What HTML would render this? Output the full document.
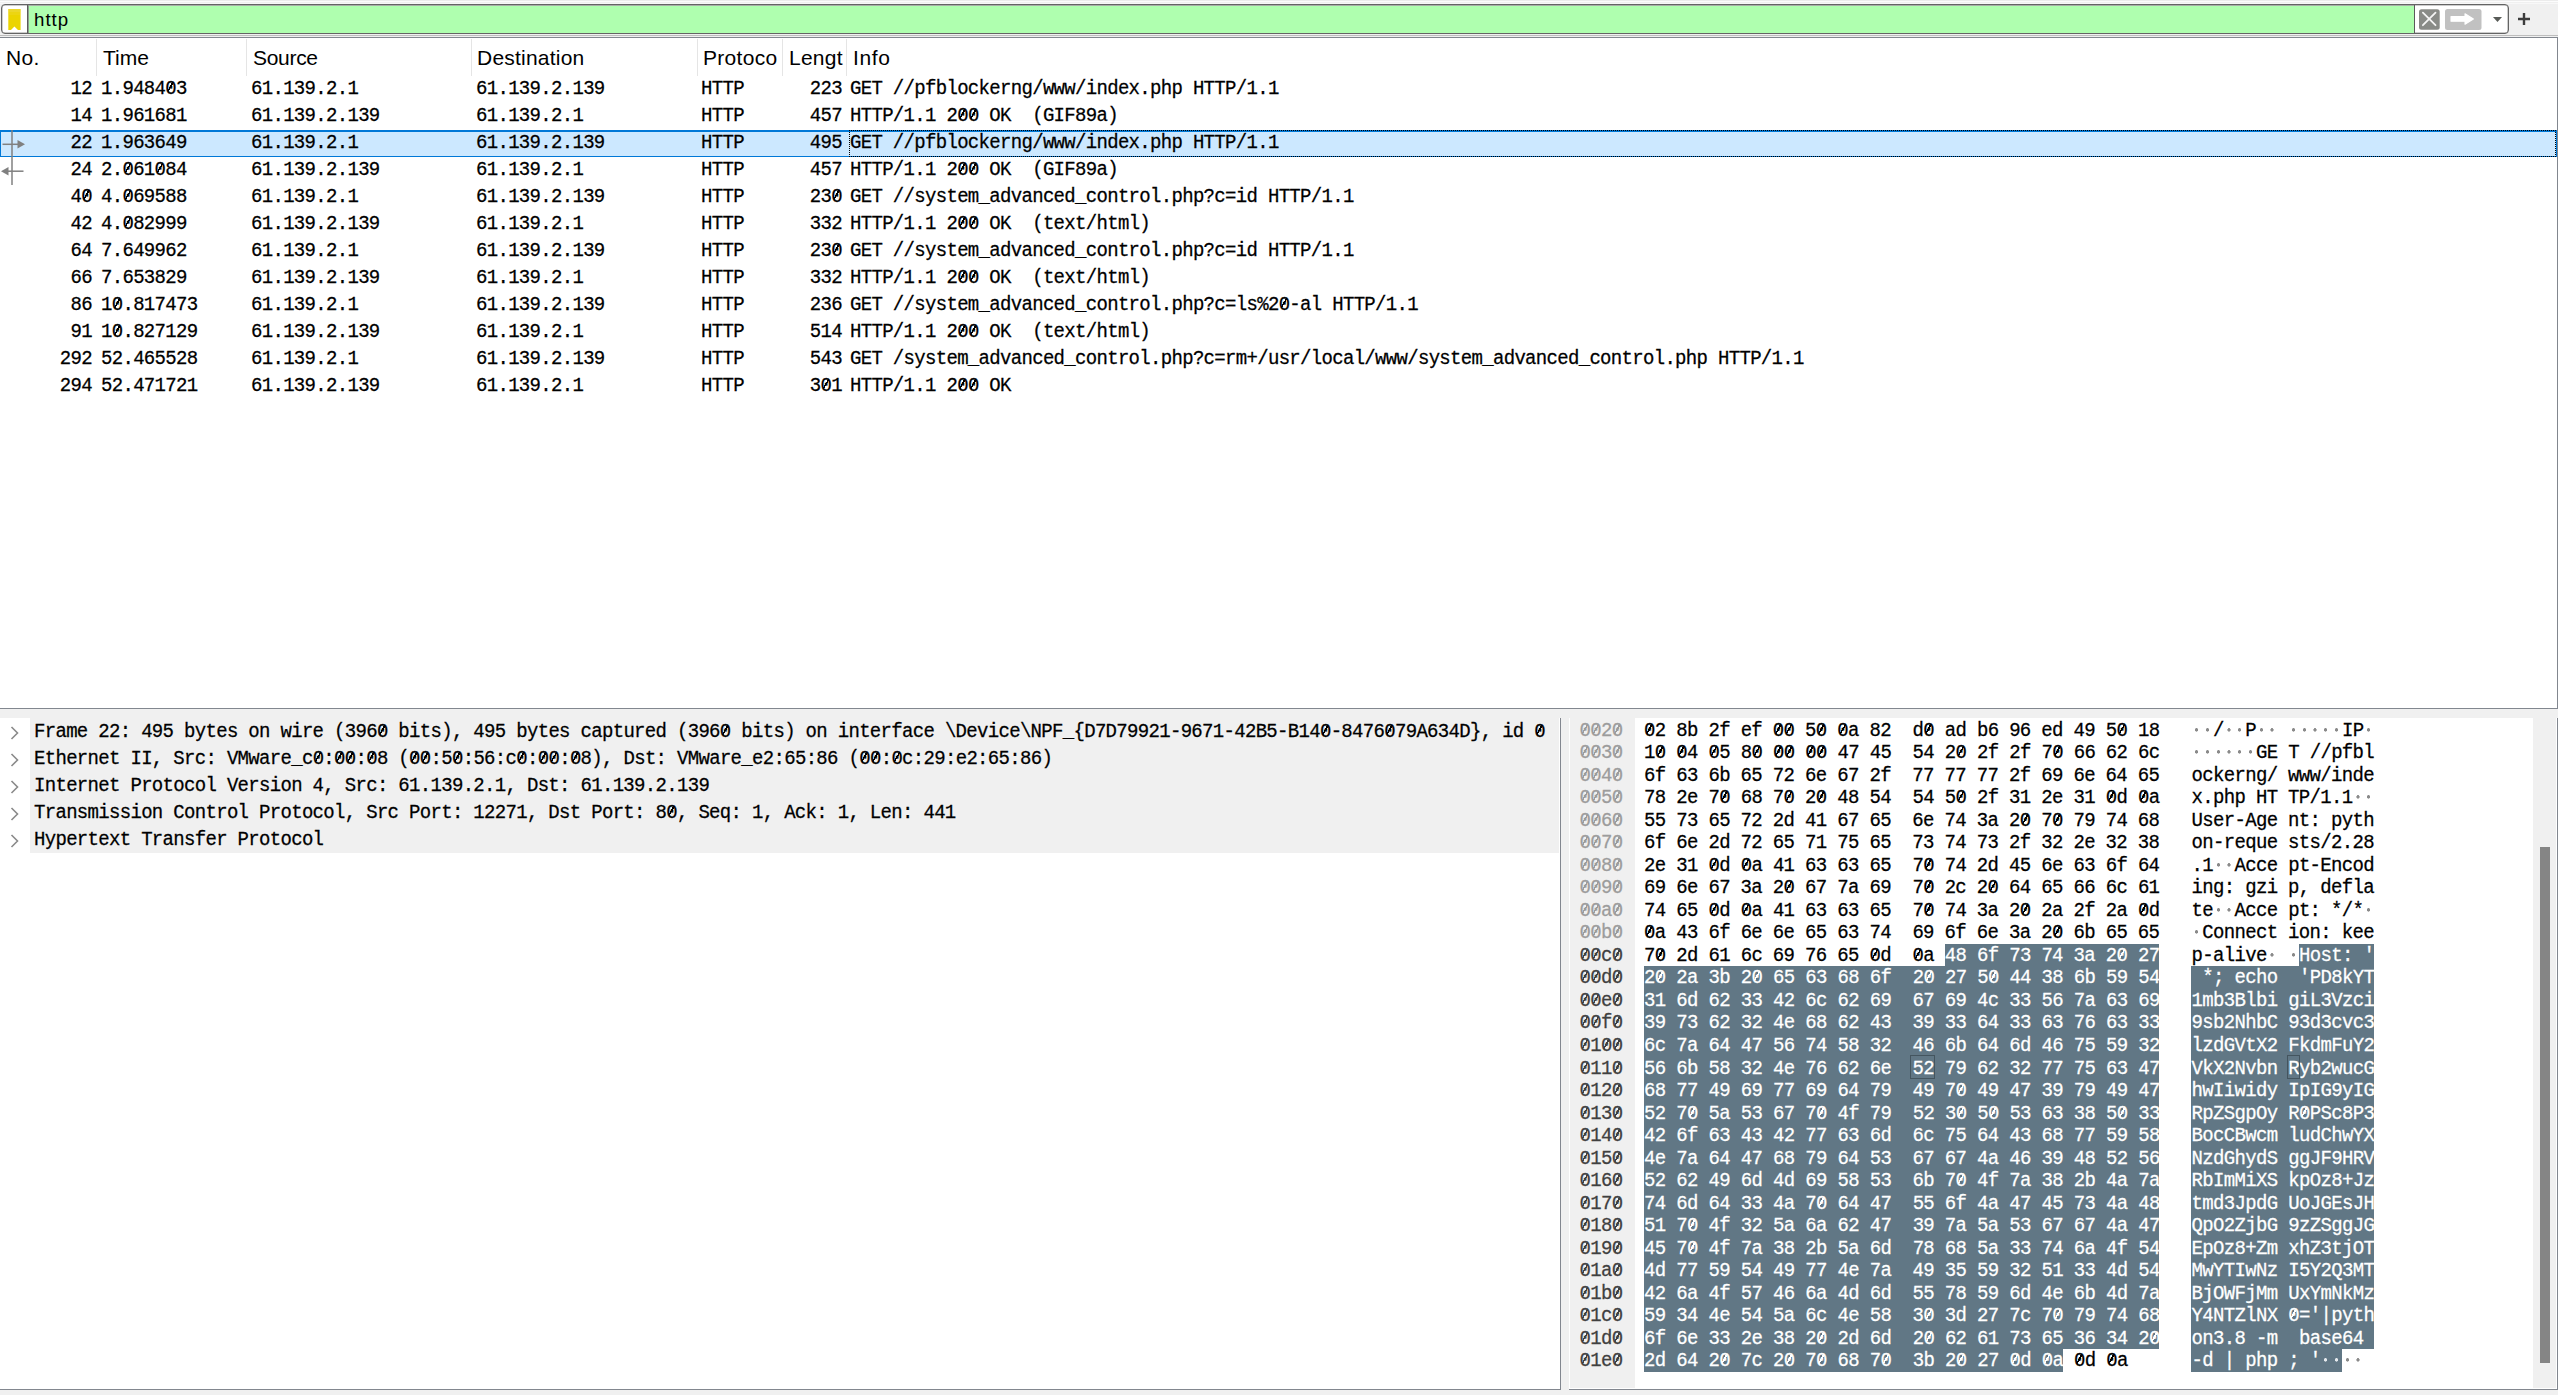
<!DOCTYPE html>
<html><head><meta charset="utf-8"><title>Wireshark</title>
<style>
*{box-sizing:border-box;margin:0;padding:0}
html,body{width:2558px;height:1395px;overflow:hidden;background:#f0f0f0;position:relative}
.a{position:absolute}
.m{font-family:'Liberation Mono',monospace;font-size:19px;letter-spacing:-0.686px;white-space:pre;color:#000;-webkit-text-stroke-width:0.25px;transform:scaleY(1.08);transform-origin:0 18.5px}
.hl.m{transform-origin:0 16.3px;letter-spacing:-0.667px}
.s{font-family:'Liberation Sans',sans-serif;white-space:pre;color:#000}
.row{position:absolute;left:0;width:2557px;height:27px;line-height:27px}
.row .c{position:absolute;top:0;height:27px;line-height:27px}
.r{text-align:right}
.hl{position:absolute;height:22.52px;line-height:22.52px}
.z{position:relative}
.z::after{content:"";position:absolute;left:2.8px;top:5.1px;width:5.4px;height:8.8px;background:linear-gradient(to bottom right,transparent calc(50% - 0.7px),currentColor calc(50% - 0.7px),currentColor calc(50% + 0.7px),transparent calc(50% + 0.7px))}
.d,.ds{color:transparent;-webkit-text-stroke-color:transparent}
.d{background:radial-gradient(circle at 50% 47%,#8a8a8a 0,#8a8a8a 1.3px,rgba(138,138,138,0) 1.9px)}
.ds{background:radial-gradient(circle at 50% 47%,#e6eaee 0,#e6eaee 1.3px,rgba(230,234,238,0) 1.9px)}
</style></head><body>

<div class="a" style="left:0;top:0;width:2558px;height:1px;background:#ececec"></div>
<div class="a" style="left:0;top:1px;width:2558px;height:1px;background:#fcfcfc"></div>
<div class="a" style="left:0;top:3px;width:2558px;height:1px;background:#f8f8f8"></div>
<div class="a" style="left:1px;top:4px;width:2508px;height:30px;border:1px solid #646464;border-radius:4px;background:#fff;box-shadow:inset 0 0 0 0.5px #9a9a9a"></div>
<div class="a" style="left:28px;top:5px;width:2386px;height:1px;background:#a8b0a8"></div>
<div class="a" style="left:28px;top:6px;width:2386px;height:27px;background:#afffaf"></div>
<div class="a" style="left:27px;top:5px;width:1px;height:28px;background:#5a5a5a"></div>
<div class="a" style="left:28px;top:5px;width:1px;height:28px;background:#8f9f8f"></div>
<div class="a" style="left:2414px;top:5px;width:1px;height:28px;background:#5a5a5a"></div>
<svg class="a" style="left:8px;top:9px" width="13" height="21" viewBox="0 0 13 21"><path d="M0.3 0 H12.6 V21 H10 L6.4 17.5 L3 21 H0.3 Z" fill="#ebd400"/><rect x="0.3" y="0" width="12.3" height="3" fill="#eedc5a" opacity="0.45"/><rect x="0.3" y="3" width="12.3" height="3" fill="#eedc5a" opacity="0.2"/></svg>
<div class="a s" style="left:34px;top:6px;height:27px;line-height:27px;font-size:18.7px;letter-spacing:1px">http</div>
<svg class="a" style="left:2419px;top:9px" width="22" height="21" viewBox="0 0 22 21"><rect x="0" y="0.2" width="20.7" height="20.5" rx="2.5" fill="#898b87"/><path d="M3.9 3.6 L16.5 16.2 M16.5 3.6 L3.9 16.2" stroke="#f4f4f4" stroke-width="1.8" stroke-linecap="round"/></svg>
<svg class="a" style="left:2445px;top:9px" width="37" height="21" viewBox="0 0 37 21"><rect x="0" y="0" width="36.5" height="21" rx="2.5" fill="#c1c1c1"/><path d="M6 7.5 H20 V4.8 L28.4 10 L20 15.2 V12.2 H6 Z" fill="#fff" stroke="#fff" stroke-width="1.1" stroke-linejoin="round"/></svg>
<svg class="a" style="left:2492px;top:16px" width="12" height="7" viewBox="0 0 12 7"><path d="M1 1 H10 L5.5 6 Z" fill="#585b57"/></svg>
<svg class="a" style="left:2517px;top:12px" width="14" height="14" viewBox="0 0 14 14"><path d="M7 1 V13 M1 7 H13" stroke="#3c3c3c" stroke-width="2.4"/></svg>
<div class="a" style="left:0;top:35px;width:2558px;height:1px;background:#bdbdbd"></div>
<div class="a" style="left:-1px;top:37px;width:2559px;height:672px;border:1px solid #82878f;background:#fff"></div>
<div class="a s" style="left:6px;top:39px;height:38px;line-height:38px;font-size:21px;letter-spacing:0.3px">No.</div>
<div class="a s" style="left:103px;top:39px;height:38px;line-height:38px;font-size:21px;letter-spacing:0px">Time</div>
<div class="a s" style="left:253px;top:39px;height:38px;line-height:38px;font-size:21px;letter-spacing:-0.3px">Source</div>
<div class="a s" style="left:477px;top:39px;height:38px;line-height:38px;font-size:21px;letter-spacing:0.22px">Destination</div>
<div class="a s" style="left:703px;top:39px;height:38px;line-height:38px;font-size:21px;letter-spacing:0.3px">Protoco</div>
<div class="a s" style="left:789px;top:39px;height:38px;line-height:38px;font-size:21px;letter-spacing:0.25px">Lengt</div>
<div class="a s" style="left:853px;top:39px;height:38px;line-height:38px;font-size:21px;letter-spacing:0.6px">Info</div>
<div class="a" style="left:96px;top:39px;width:1px;height:37px;background:#e5e5e5"></div>
<div class="a" style="left:246px;top:39px;width:1px;height:37px;background:#e5e5e5"></div>
<div class="a" style="left:471px;top:39px;width:1px;height:37px;background:#e5e5e5"></div>
<div class="a" style="left:697px;top:39px;width:1px;height:37px;background:#e5e5e5"></div>
<div class="a" style="left:782px;top:39px;width:1px;height:37px;background:#e5e5e5"></div>
<div class="a" style="left:846px;top:39px;width:1px;height:37px;background:#e5e5e5"></div>
<div class="a m r" style="left:0;top:76px;width:92px;height:27px;line-height:27px">12</div>
<div class="a m" style="left:101px;top:76px;height:27px;line-height:27px">1.9484<span class="z">0</span>3</div>
<div class="a m" style="left:251px;top:76px;height:27px;line-height:27px">61.139.2.1</div>
<div class="a m" style="left:476px;top:76px;height:27px;line-height:27px">61.139.2.139</div>
<div class="a m" style="left:701px;top:76px;height:27px;line-height:27px">HTTP</div>
<div class="a m r" style="left:700px;top:76px;width:142px;height:27px;line-height:27px">223</div>
<div class="a m" style="left:850px;top:76px;height:27px;line-height:27px">GET //pfblockerng/www/index.php HTTP/1.1</div>
<div class="a m r" style="left:0;top:103px;width:92px;height:27px;line-height:27px">14</div>
<div class="a m" style="left:101px;top:103px;height:27px;line-height:27px">1.961681</div>
<div class="a m" style="left:251px;top:103px;height:27px;line-height:27px">61.139.2.139</div>
<div class="a m" style="left:476px;top:103px;height:27px;line-height:27px">61.139.2.1</div>
<div class="a m" style="left:701px;top:103px;height:27px;line-height:27px">HTTP</div>
<div class="a m r" style="left:700px;top:103px;width:142px;height:27px;line-height:27px">457</div>
<div class="a m" style="left:850px;top:103px;height:27px;line-height:27px">HTTP/1.1 2<span class="z">0</span><span class="z">0</span> OK  (GIF89a)</div>
<div class="a" style="left:0;top:130px;width:2557px;height:27px;background:#cce8ff;border-top:2px solid #0078d7;border-bottom:1px solid #0078d7;border-left:1px solid #0078d7;border-right:1px solid #0078d7"></div>
<div class="a" style="left:849px;top:130px;width:1707px;height:27px;border:1px dotted #000"></div>
<div class="a m r" style="left:0;top:130px;width:92px;height:27px;line-height:27px">22</div>
<div class="a m" style="left:101px;top:130px;height:27px;line-height:27px">1.963649</div>
<div class="a m" style="left:251px;top:130px;height:27px;line-height:27px">61.139.2.1</div>
<div class="a m" style="left:476px;top:130px;height:27px;line-height:27px">61.139.2.139</div>
<div class="a m" style="left:701px;top:130px;height:27px;line-height:27px">HTTP</div>
<div class="a m r" style="left:700px;top:130px;width:142px;height:27px;line-height:27px">495</div>
<div class="a m" style="left:850px;top:130px;height:27px;line-height:27px">GET //pfblockerng/www/index.php HTTP/1.1</div>
<div class="a m r" style="left:0;top:157px;width:92px;height:27px;line-height:27px">24</div>
<div class="a m" style="left:101px;top:157px;height:27px;line-height:27px">2.<span class="z">0</span>61<span class="z">0</span>84</div>
<div class="a m" style="left:251px;top:157px;height:27px;line-height:27px">61.139.2.139</div>
<div class="a m" style="left:476px;top:157px;height:27px;line-height:27px">61.139.2.1</div>
<div class="a m" style="left:701px;top:157px;height:27px;line-height:27px">HTTP</div>
<div class="a m r" style="left:700px;top:157px;width:142px;height:27px;line-height:27px">457</div>
<div class="a m" style="left:850px;top:157px;height:27px;line-height:27px">HTTP/1.1 2<span class="z">0</span><span class="z">0</span> OK  (GIF89a)</div>
<div class="a m r" style="left:0;top:184px;width:92px;height:27px;line-height:27px">4<span class="z">0</span></div>
<div class="a m" style="left:101px;top:184px;height:27px;line-height:27px">4.<span class="z">0</span>69588</div>
<div class="a m" style="left:251px;top:184px;height:27px;line-height:27px">61.139.2.1</div>
<div class="a m" style="left:476px;top:184px;height:27px;line-height:27px">61.139.2.139</div>
<div class="a m" style="left:701px;top:184px;height:27px;line-height:27px">HTTP</div>
<div class="a m r" style="left:700px;top:184px;width:142px;height:27px;line-height:27px">23<span class="z">0</span></div>
<div class="a m" style="left:850px;top:184px;height:27px;line-height:27px">GET //system_advanced_control.php?c=id HTTP/1.1</div>
<div class="a m r" style="left:0;top:211px;width:92px;height:27px;line-height:27px">42</div>
<div class="a m" style="left:101px;top:211px;height:27px;line-height:27px">4.<span class="z">0</span>82999</div>
<div class="a m" style="left:251px;top:211px;height:27px;line-height:27px">61.139.2.139</div>
<div class="a m" style="left:476px;top:211px;height:27px;line-height:27px">61.139.2.1</div>
<div class="a m" style="left:701px;top:211px;height:27px;line-height:27px">HTTP</div>
<div class="a m r" style="left:700px;top:211px;width:142px;height:27px;line-height:27px">332</div>
<div class="a m" style="left:850px;top:211px;height:27px;line-height:27px">HTTP/1.1 2<span class="z">0</span><span class="z">0</span> OK  (text/html)</div>
<div class="a m r" style="left:0;top:238px;width:92px;height:27px;line-height:27px">64</div>
<div class="a m" style="left:101px;top:238px;height:27px;line-height:27px">7.649962</div>
<div class="a m" style="left:251px;top:238px;height:27px;line-height:27px">61.139.2.1</div>
<div class="a m" style="left:476px;top:238px;height:27px;line-height:27px">61.139.2.139</div>
<div class="a m" style="left:701px;top:238px;height:27px;line-height:27px">HTTP</div>
<div class="a m r" style="left:700px;top:238px;width:142px;height:27px;line-height:27px">23<span class="z">0</span></div>
<div class="a m" style="left:850px;top:238px;height:27px;line-height:27px">GET //system_advanced_control.php?c=id HTTP/1.1</div>
<div class="a m r" style="left:0;top:265px;width:92px;height:27px;line-height:27px">66</div>
<div class="a m" style="left:101px;top:265px;height:27px;line-height:27px">7.653829</div>
<div class="a m" style="left:251px;top:265px;height:27px;line-height:27px">61.139.2.139</div>
<div class="a m" style="left:476px;top:265px;height:27px;line-height:27px">61.139.2.1</div>
<div class="a m" style="left:701px;top:265px;height:27px;line-height:27px">HTTP</div>
<div class="a m r" style="left:700px;top:265px;width:142px;height:27px;line-height:27px">332</div>
<div class="a m" style="left:850px;top:265px;height:27px;line-height:27px">HTTP/1.1 2<span class="z">0</span><span class="z">0</span> OK  (text/html)</div>
<div class="a m r" style="left:0;top:292px;width:92px;height:27px;line-height:27px">86</div>
<div class="a m" style="left:101px;top:292px;height:27px;line-height:27px">1<span class="z">0</span>.817473</div>
<div class="a m" style="left:251px;top:292px;height:27px;line-height:27px">61.139.2.1</div>
<div class="a m" style="left:476px;top:292px;height:27px;line-height:27px">61.139.2.139</div>
<div class="a m" style="left:701px;top:292px;height:27px;line-height:27px">HTTP</div>
<div class="a m r" style="left:700px;top:292px;width:142px;height:27px;line-height:27px">236</div>
<div class="a m" style="left:850px;top:292px;height:27px;line-height:27px">GET //system_advanced_control.php?c=ls%2<span class="z">0</span>-al HTTP/1.1</div>
<div class="a m r" style="left:0;top:319px;width:92px;height:27px;line-height:27px">91</div>
<div class="a m" style="left:101px;top:319px;height:27px;line-height:27px">1<span class="z">0</span>.827129</div>
<div class="a m" style="left:251px;top:319px;height:27px;line-height:27px">61.139.2.139</div>
<div class="a m" style="left:476px;top:319px;height:27px;line-height:27px">61.139.2.1</div>
<div class="a m" style="left:701px;top:319px;height:27px;line-height:27px">HTTP</div>
<div class="a m r" style="left:700px;top:319px;width:142px;height:27px;line-height:27px">514</div>
<div class="a m" style="left:850px;top:319px;height:27px;line-height:27px">HTTP/1.1 2<span class="z">0</span><span class="z">0</span> OK  (text/html)</div>
<div class="a m r" style="left:0;top:346px;width:92px;height:27px;line-height:27px">292</div>
<div class="a m" style="left:101px;top:346px;height:27px;line-height:27px">52.465528</div>
<div class="a m" style="left:251px;top:346px;height:27px;line-height:27px">61.139.2.1</div>
<div class="a m" style="left:476px;top:346px;height:27px;line-height:27px">61.139.2.139</div>
<div class="a m" style="left:701px;top:346px;height:27px;line-height:27px">HTTP</div>
<div class="a m r" style="left:700px;top:346px;width:142px;height:27px;line-height:27px">543</div>
<div class="a m" style="left:850px;top:346px;height:27px;line-height:27px">GET /system_advanced_control.php?c=rm+/usr/local/www/system_advanced_control.php HTTP/1.1</div>
<div class="a m r" style="left:0;top:373px;width:92px;height:27px;line-height:27px">294</div>
<div class="a m" style="left:101px;top:373px;height:27px;line-height:27px">52.471721</div>
<div class="a m" style="left:251px;top:373px;height:27px;line-height:27px">61.139.2.139</div>
<div class="a m" style="left:476px;top:373px;height:27px;line-height:27px">61.139.2.1</div>
<div class="a m" style="left:701px;top:373px;height:27px;line-height:27px">HTTP</div>
<div class="a m r" style="left:700px;top:373px;width:142px;height:27px;line-height:27px">3<span class="z">0</span>1</div>
<div class="a m" style="left:850px;top:373px;height:27px;line-height:27px">HTTP/1.1 2<span class="z">0</span><span class="z">0</span> OK</div>
<svg class="a" style="left:0;top:128px" width="30" height="60" viewBox="0 0 30 60"><g stroke="#808080" stroke-width="1.5" fill="none"><path d="M12 2 V57"/><path d="M2.5 16.3 H20"/><path d="M23.5 43.2 H5"/></g><path d="M17.5 12 L25 16.3 L17.5 20.6 Z" fill="#808080"/><path d="M1 43.2 L8.5 39 L8.5 47.4 Z" fill="#808080"/></svg>
<div class="a" style="left:0;top:718px;width:1561px;height:672px;background:#fff;border-right:1px solid #82878f;border-bottom:1px solid #82878f"></div>
<div class="a" style="left:30px;top:718px;width:1529px;height:135px;background:#f0f0f0"></div>
<svg class="a" style="left:10px;top:725.5px" width="10" height="14" viewBox="0 0 10 14"><path d="M1.5 1 L7.5 7 L1.5 13" stroke="#8a8a8a" stroke-width="1.6" fill="none"/></svg>
<div class="a m" style="left:34px;top:719px;height:27px;line-height:27px">Frame 22: 495 bytes on wire (396<span class="z">0</span> bits), 495 bytes captured (396<span class="z">0</span> bits) on interface \Device\NPF_{D7D79921-9671-42B5-B14<span class="z">0</span>-8476<span class="z">0</span>79A634D}, id <span class="z">0</span></div>
<svg class="a" style="left:10px;top:752.5px" width="10" height="14" viewBox="0 0 10 14"><path d="M1.5 1 L7.5 7 L1.5 13" stroke="#8a8a8a" stroke-width="1.6" fill="none"/></svg>
<div class="a m" style="left:34px;top:746px;height:27px;line-height:27px">Ethernet II, Src: VMware_c<span class="z">0</span>:<span class="z">0</span><span class="z">0</span>:<span class="z">0</span>8 (<span class="z">0</span><span class="z">0</span>:5<span class="z">0</span>:56:c<span class="z">0</span>:<span class="z">0</span><span class="z">0</span>:<span class="z">0</span>8), Dst: VMware_e2:65:86 (<span class="z">0</span><span class="z">0</span>:<span class="z">0</span>c:29:e2:65:86)</div>
<svg class="a" style="left:10px;top:779.5px" width="10" height="14" viewBox="0 0 10 14"><path d="M1.5 1 L7.5 7 L1.5 13" stroke="#8a8a8a" stroke-width="1.6" fill="none"/></svg>
<div class="a m" style="left:34px;top:773px;height:27px;line-height:27px">Internet Protocol Version 4, Src: 61.139.2.1, Dst: 61.139.2.139</div>
<svg class="a" style="left:10px;top:806.5px" width="10" height="14" viewBox="0 0 10 14"><path d="M1.5 1 L7.5 7 L1.5 13" stroke="#8a8a8a" stroke-width="1.6" fill="none"/></svg>
<div class="a m" style="left:34px;top:800px;height:27px;line-height:27px">Transmission Control Protocol, Src Port: 12271, Dst Port: 8<span class="z">0</span>, Seq: 1, Ack: 1, Len: 441</div>
<svg class="a" style="left:10px;top:833.5px" width="10" height="14" viewBox="0 0 10 14"><path d="M1.5 1 L7.5 7 L1.5 13" stroke="#8a8a8a" stroke-width="1.6" fill="none"/></svg>
<div class="a m" style="left:34px;top:827px;height:27px;line-height:27px">Hypertext Transfer Protocol</div>
<div class="a" style="left:1569px;top:718px;width:989px;height:672px;background:#fff;border-bottom:1px solid #82878f;border-right:1px solid #82878f"></div>
<div class="a" style="left:1570px;top:718px;width:65px;height:670px;background:#f0f0f0"></div>
<div class="a" style="left:2533px;top:718px;width:23px;height:670px;background:#f0f0f0"></div>
<div class="a" style="left:2540px;top:847px;width:10px;height:516px;background:#858585"></div>
<div class="hl m" style="left:1579.59px;top:719.70px;color:#9c9c9c"><span class="z">0</span><span class="z">0</span>2<span class="z">0</span></div>
<div class="hl m" style="left:1644.00px;top:719.70px"><span class="z">0</span>2 8b 2f ef <span class="z">0</span><span class="z">0</span> 5<span class="z">0</span> <span class="z">0</span>a 82  d<span class="z">0</span> ad b6 96 ed 49 5<span class="z">0</span> 18</div>
<div class="hl m" style="left:2191.49px;top:719.70px"><span class="d">·</span><span class="d">·</span>/<span class="d">·</span><span class="d">·</span>P<span class="d">·</span><span class="d">·</span> <span class="d">·</span><span class="d">·</span><span class="d">·</span><span class="d">·</span><span class="d">·</span>IP<span class="d">·</span></div>
<div class="hl m" style="left:1579.59px;top:742.22px;color:#9c9c9c"><span class="z">0</span><span class="z">0</span>3<span class="z">0</span></div>
<div class="hl m" style="left:1644.00px;top:742.22px">1<span class="z">0</span> <span class="z">0</span>4 <span class="z">0</span>5 8<span class="z">0</span> <span class="z">0</span><span class="z">0</span> <span class="z">0</span><span class="z">0</span> 47 45  54 2<span class="z">0</span> 2f 2f 7<span class="z">0</span> 66 62 6c</div>
<div class="hl m" style="left:2191.49px;top:742.22px"><span class="d">·</span><span class="d">·</span><span class="d">·</span><span class="d">·</span><span class="d">·</span><span class="d">·</span>GE T //pfbl</div>
<div class="hl m" style="left:1579.59px;top:764.74px;color:#9c9c9c"><span class="z">0</span><span class="z">0</span>4<span class="z">0</span></div>
<div class="hl m" style="left:1644.00px;top:764.74px">6f 63 6b 65 72 6e 67 2f  77 77 77 2f 69 6e 64 65</div>
<div class="hl m" style="left:2191.49px;top:764.74px">ockerng/ www/inde</div>
<div class="hl m" style="left:1579.59px;top:787.26px;color:#9c9c9c"><span class="z">0</span><span class="z">0</span>5<span class="z">0</span></div>
<div class="hl m" style="left:1644.00px;top:787.26px">78 2e 7<span class="z">0</span> 68 7<span class="z">0</span> 2<span class="z">0</span> 48 54  54 5<span class="z">0</span> 2f 31 2e 31 <span class="z">0</span>d <span class="z">0</span>a</div>
<div class="hl m" style="left:2191.49px;top:787.26px">x.php HT TP/1.1<span class="d">·</span><span class="d">·</span></div>
<div class="hl m" style="left:1579.59px;top:809.78px;color:#9c9c9c"><span class="z">0</span><span class="z">0</span>6<span class="z">0</span></div>
<div class="hl m" style="left:1644.00px;top:809.78px">55 73 65 72 2d 41 67 65  6e 74 3a 2<span class="z">0</span> 7<span class="z">0</span> 79 74 68</div>
<div class="hl m" style="left:2191.49px;top:809.78px">User-Age nt: pyth</div>
<div class="hl m" style="left:1579.59px;top:832.30px;color:#9c9c9c"><span class="z">0</span><span class="z">0</span>7<span class="z">0</span></div>
<div class="hl m" style="left:1644.00px;top:832.30px">6f 6e 2d 72 65 71 75 65  73 74 73 2f 32 2e 32 38</div>
<div class="hl m" style="left:2191.49px;top:832.30px">on-reque sts/2.28</div>
<div class="hl m" style="left:1579.59px;top:854.82px;color:#9c9c9c"><span class="z">0</span><span class="z">0</span>8<span class="z">0</span></div>
<div class="hl m" style="left:1644.00px;top:854.82px">2e 31 <span class="z">0</span>d <span class="z">0</span>a 41 63 63 65  7<span class="z">0</span> 74 2d 45 6e 63 6f 64</div>
<div class="hl m" style="left:2191.49px;top:854.82px">.1<span class="d">·</span><span class="d">·</span>Acce pt-Encod</div>
<div class="hl m" style="left:1579.59px;top:877.34px;color:#9c9c9c"><span class="z">0</span><span class="z">0</span>9<span class="z">0</span></div>
<div class="hl m" style="left:1644.00px;top:877.34px">69 6e 67 3a 2<span class="z">0</span> 67 7a 69  7<span class="z">0</span> 2c 2<span class="z">0</span> 64 65 66 6c 61</div>
<div class="hl m" style="left:2191.49px;top:877.34px">ing: gzi p, defla</div>
<div class="hl m" style="left:1579.59px;top:899.86px;color:#9c9c9c"><span class="z">0</span><span class="z">0</span>a<span class="z">0</span></div>
<div class="hl m" style="left:1644.00px;top:899.86px">74 65 <span class="z">0</span>d <span class="z">0</span>a 41 63 63 65  7<span class="z">0</span> 74 3a 2<span class="z">0</span> 2a 2f 2a <span class="z">0</span>d</div>
<div class="hl m" style="left:2191.49px;top:899.86px">te<span class="d">·</span><span class="d">·</span>Acce pt: */*<span class="d">·</span></div>
<div class="hl m" style="left:1579.59px;top:922.38px;color:#9c9c9c"><span class="z">0</span><span class="z">0</span>b<span class="z">0</span></div>
<div class="hl m" style="left:1644.00px;top:922.38px"><span class="z">0</span>a 43 6f 6e 6e 65 63 74  69 6f 6e 3a 2<span class="z">0</span> 6b 65 65</div>
<div class="hl m" style="left:2191.49px;top:922.38px"><span class="d">·</span>Connect ion: kee</div>
<div class="a" style="left:1944.58px;top:943.80px;width:214.70px;height:22.52px;background:#617785"></div>
<div class="a" style="left:2298.84px;top:943.80px;width:75.14px;height:22.52px;background:#617785"></div>
<div class="hl m" style="left:1579.59px;top:944.90px;color:#404040"><span class="z">0</span><span class="z">0</span>c<span class="z">0</span></div>
<div class="hl m" style="left:1644.00px;top:944.90px">7<span class="z">0</span> 2d 61 6c 69 76 65 <span class="z">0</span>d  <span class="z">0</span>a <span style="color:#fff">48</span> <span style="color:#fff">6f</span> <span style="color:#fff">73</span> <span style="color:#fff">74</span> <span style="color:#fff">3a</span> <span style="color:#fff">2<span class="z">0</span></span> <span style="color:#fff">27</span></div>
<div class="hl m" style="left:2191.49px;top:944.90px">p-alive<span class="d">·</span> <span class="d">·</span><span style="color:#fff">H</span><span style="color:#fff">o</span><span style="color:#fff">s</span><span style="color:#fff">t</span><span style="color:#fff">:</span><span style="color:#fff"> </span><span style="color:#fff">&#x27;</span></div>
<div class="a" style="left:1644.00px;top:966.32px;width:515.28px;height:22.52px;background:#617785"></div>
<div class="a" style="left:2191.49px;top:966.32px;width:182.49px;height:22.52px;background:#617785"></div>
<div class="hl m" style="left:1579.59px;top:967.42px;color:#404040"><span class="z">0</span><span class="z">0</span>d<span class="z">0</span></div>
<div class="hl m" style="left:1644.00px;top:967.42px"><span style="color:#fff">2<span class="z">0</span></span> <span style="color:#fff">2a</span> <span style="color:#fff">3b</span> <span style="color:#fff">2<span class="z">0</span></span> <span style="color:#fff">65</span> <span style="color:#fff">63</span> <span style="color:#fff">68</span> <span style="color:#fff">6f</span>  <span style="color:#fff">2<span class="z">0</span></span> <span style="color:#fff">27</span> <span style="color:#fff">5<span class="z">0</span></span> <span style="color:#fff">44</span> <span style="color:#fff">38</span> <span style="color:#fff">6b</span> <span style="color:#fff">59</span> <span style="color:#fff">54</span></div>
<div class="hl m" style="left:2191.49px;top:967.42px"><span style="color:#fff"> </span><span style="color:#fff">*</span><span style="color:#fff">;</span><span style="color:#fff"> </span><span style="color:#fff">e</span><span style="color:#fff">c</span><span style="color:#fff">h</span><span style="color:#fff">o</span> <span style="color:#fff"> </span><span style="color:#fff">&#x27;</span><span style="color:#fff">P</span><span style="color:#fff">D</span><span style="color:#fff">8</span><span style="color:#fff">k</span><span style="color:#fff">Y</span><span style="color:#fff">T</span></div>
<div class="a" style="left:1644.00px;top:988.84px;width:515.28px;height:22.52px;background:#617785"></div>
<div class="a" style="left:2191.49px;top:988.84px;width:182.49px;height:22.52px;background:#617785"></div>
<div class="hl m" style="left:1579.59px;top:989.94px;color:#404040"><span class="z">0</span><span class="z">0</span>e<span class="z">0</span></div>
<div class="hl m" style="left:1644.00px;top:989.94px"><span style="color:#fff">31</span> <span style="color:#fff">6d</span> <span style="color:#fff">62</span> <span style="color:#fff">33</span> <span style="color:#fff">42</span> <span style="color:#fff">6c</span> <span style="color:#fff">62</span> <span style="color:#fff">69</span>  <span style="color:#fff">67</span> <span style="color:#fff">69</span> <span style="color:#fff">4c</span> <span style="color:#fff">33</span> <span style="color:#fff">56</span> <span style="color:#fff">7a</span> <span style="color:#fff">63</span> <span style="color:#fff">69</span></div>
<div class="hl m" style="left:2191.49px;top:989.94px"><span style="color:#fff">1</span><span style="color:#fff">m</span><span style="color:#fff">b</span><span style="color:#fff">3</span><span style="color:#fff">B</span><span style="color:#fff">l</span><span style="color:#fff">b</span><span style="color:#fff">i</span> <span style="color:#fff">g</span><span style="color:#fff">i</span><span style="color:#fff">L</span><span style="color:#fff">3</span><span style="color:#fff">V</span><span style="color:#fff">z</span><span style="color:#fff">c</span><span style="color:#fff">i</span></div>
<div class="a" style="left:1644.00px;top:1011.36px;width:515.28px;height:22.52px;background:#617785"></div>
<div class="a" style="left:2191.49px;top:1011.36px;width:182.49px;height:22.52px;background:#617785"></div>
<div class="hl m" style="left:1579.59px;top:1012.46px;color:#404040"><span class="z">0</span><span class="z">0</span>f<span class="z">0</span></div>
<div class="hl m" style="left:1644.00px;top:1012.46px"><span style="color:#fff">39</span> <span style="color:#fff">73</span> <span style="color:#fff">62</span> <span style="color:#fff">32</span> <span style="color:#fff">4e</span> <span style="color:#fff">68</span> <span style="color:#fff">62</span> <span style="color:#fff">43</span>  <span style="color:#fff">39</span> <span style="color:#fff">33</span> <span style="color:#fff">64</span> <span style="color:#fff">33</span> <span style="color:#fff">63</span> <span style="color:#fff">76</span> <span style="color:#fff">63</span> <span style="color:#fff">33</span></div>
<div class="hl m" style="left:2191.49px;top:1012.46px"><span style="color:#fff">9</span><span style="color:#fff">s</span><span style="color:#fff">b</span><span style="color:#fff">2</span><span style="color:#fff">N</span><span style="color:#fff">h</span><span style="color:#fff">b</span><span style="color:#fff">C</span> <span style="color:#fff">9</span><span style="color:#fff">3</span><span style="color:#fff">d</span><span style="color:#fff">3</span><span style="color:#fff">c</span><span style="color:#fff">v</span><span style="color:#fff">c</span><span style="color:#fff">3</span></div>
<div class="a" style="left:1644.00px;top:1033.88px;width:515.28px;height:22.52px;background:#617785"></div>
<div class="a" style="left:2191.49px;top:1033.88px;width:182.49px;height:22.52px;background:#617785"></div>
<div class="hl m" style="left:1579.59px;top:1034.98px;color:#404040"><span class="z">0</span>1<span class="z">0</span><span class="z">0</span></div>
<div class="hl m" style="left:1644.00px;top:1034.98px"><span style="color:#fff">6c</span> <span style="color:#fff">7a</span> <span style="color:#fff">64</span> <span style="color:#fff">47</span> <span style="color:#fff">56</span> <span style="color:#fff">74</span> <span style="color:#fff">58</span> <span style="color:#fff">32</span>  <span style="color:#fff">46</span> <span style="color:#fff">6b</span> <span style="color:#fff">64</span> <span style="color:#fff">6d</span> <span style="color:#fff">46</span> <span style="color:#fff">75</span> <span style="color:#fff">59</span> <span style="color:#fff">32</span></div>
<div class="hl m" style="left:2191.49px;top:1034.98px"><span style="color:#fff">l</span><span style="color:#fff">z</span><span style="color:#fff">d</span><span style="color:#fff">G</span><span style="color:#fff">V</span><span style="color:#fff">t</span><span style="color:#fff">X</span><span style="color:#fff">2</span> <span style="color:#fff">F</span><span style="color:#fff">k</span><span style="color:#fff">d</span><span style="color:#fff">m</span><span style="color:#fff">F</span><span style="color:#fff">u</span><span style="color:#fff">Y</span><span style="color:#fff">2</span></div>
<div class="a" style="left:1644.00px;top:1056.40px;width:515.28px;height:22.52px;background:#617785"></div>
<div class="a" style="left:2191.49px;top:1056.40px;width:182.49px;height:22.52px;background:#617785"></div>
<div class="hl m" style="left:1579.59px;top:1057.50px;color:#404040"><span class="z">0</span>11<span class="z">0</span></div>
<div class="hl m" style="left:1644.00px;top:1057.50px"><span style="color:#fff">56</span> <span style="color:#fff">6b</span> <span style="color:#fff">58</span> <span style="color:#fff">32</span> <span style="color:#fff">4e</span> <span style="color:#fff">76</span> <span style="color:#fff">62</span> <span style="color:#fff">6e</span>  <span style="color:#fff">52</span> <span style="color:#fff">79</span> <span style="color:#fff">62</span> <span style="color:#fff">32</span> <span style="color:#fff">77</span> <span style="color:#fff">75</span> <span style="color:#fff">63</span> <span style="color:#fff">47</span></div>
<div class="hl m" style="left:2191.49px;top:1057.50px"><span style="color:#fff">V</span><span style="color:#fff">k</span><span style="color:#fff">X</span><span style="color:#fff">2</span><span style="color:#fff">N</span><span style="color:#fff">v</span><span style="color:#fff">b</span><span style="color:#fff">n</span> <span style="color:#fff">R</span><span style="color:#fff">y</span><span style="color:#fff">b</span><span style="color:#fff">2</span><span style="color:#fff">w</span><span style="color:#fff">u</span><span style="color:#fff">c</span><span style="color:#fff">G</span></div>
<div class="a" style="left:1644.00px;top:1078.92px;width:515.28px;height:22.52px;background:#617785"></div>
<div class="a" style="left:2191.49px;top:1078.92px;width:182.49px;height:22.52px;background:#617785"></div>
<div class="hl m" style="left:1579.59px;top:1080.02px;color:#404040"><span class="z">0</span>12<span class="z">0</span></div>
<div class="hl m" style="left:1644.00px;top:1080.02px"><span style="color:#fff">68</span> <span style="color:#fff">77</span> <span style="color:#fff">49</span> <span style="color:#fff">69</span> <span style="color:#fff">77</span> <span style="color:#fff">69</span> <span style="color:#fff">64</span> <span style="color:#fff">79</span>  <span style="color:#fff">49</span> <span style="color:#fff">7<span class="z">0</span></span> <span style="color:#fff">49</span> <span style="color:#fff">47</span> <span style="color:#fff">39</span> <span style="color:#fff">79</span> <span style="color:#fff">49</span> <span style="color:#fff">47</span></div>
<div class="hl m" style="left:2191.49px;top:1080.02px"><span style="color:#fff">h</span><span style="color:#fff">w</span><span style="color:#fff">I</span><span style="color:#fff">i</span><span style="color:#fff">w</span><span style="color:#fff">i</span><span style="color:#fff">d</span><span style="color:#fff">y</span> <span style="color:#fff">I</span><span style="color:#fff">p</span><span style="color:#fff">I</span><span style="color:#fff">G</span><span style="color:#fff">9</span><span style="color:#fff">y</span><span style="color:#fff">I</span><span style="color:#fff">G</span></div>
<div class="a" style="left:1644.00px;top:1101.44px;width:515.28px;height:22.52px;background:#617785"></div>
<div class="a" style="left:2191.49px;top:1101.44px;width:182.49px;height:22.52px;background:#617785"></div>
<div class="hl m" style="left:1579.59px;top:1102.54px;color:#404040"><span class="z">0</span>13<span class="z">0</span></div>
<div class="hl m" style="left:1644.00px;top:1102.54px"><span style="color:#fff">52</span> <span style="color:#fff">7<span class="z">0</span></span> <span style="color:#fff">5a</span> <span style="color:#fff">53</span> <span style="color:#fff">67</span> <span style="color:#fff">7<span class="z">0</span></span> <span style="color:#fff">4f</span> <span style="color:#fff">79</span>  <span style="color:#fff">52</span> <span style="color:#fff">3<span class="z">0</span></span> <span style="color:#fff">5<span class="z">0</span></span> <span style="color:#fff">53</span> <span style="color:#fff">63</span> <span style="color:#fff">38</span> <span style="color:#fff">5<span class="z">0</span></span> <span style="color:#fff">33</span></div>
<div class="hl m" style="left:2191.49px;top:1102.54px"><span style="color:#fff">R</span><span style="color:#fff">p</span><span style="color:#fff">Z</span><span style="color:#fff">S</span><span style="color:#fff">g</span><span style="color:#fff">p</span><span style="color:#fff">O</span><span style="color:#fff">y</span> <span style="color:#fff">R</span><span style="color:#fff"><span class="z">0</span></span><span style="color:#fff">P</span><span style="color:#fff">S</span><span style="color:#fff">c</span><span style="color:#fff">8</span><span style="color:#fff">P</span><span style="color:#fff">3</span></div>
<div class="a" style="left:1644.00px;top:1123.96px;width:515.28px;height:22.52px;background:#617785"></div>
<div class="a" style="left:2191.49px;top:1123.96px;width:182.49px;height:22.52px;background:#617785"></div>
<div class="hl m" style="left:1579.59px;top:1125.06px;color:#404040"><span class="z">0</span>14<span class="z">0</span></div>
<div class="hl m" style="left:1644.00px;top:1125.06px"><span style="color:#fff">42</span> <span style="color:#fff">6f</span> <span style="color:#fff">63</span> <span style="color:#fff">43</span> <span style="color:#fff">42</span> <span style="color:#fff">77</span> <span style="color:#fff">63</span> <span style="color:#fff">6d</span>  <span style="color:#fff">6c</span> <span style="color:#fff">75</span> <span style="color:#fff">64</span> <span style="color:#fff">43</span> <span style="color:#fff">68</span> <span style="color:#fff">77</span> <span style="color:#fff">59</span> <span style="color:#fff">58</span></div>
<div class="hl m" style="left:2191.49px;top:1125.06px"><span style="color:#fff">B</span><span style="color:#fff">o</span><span style="color:#fff">c</span><span style="color:#fff">C</span><span style="color:#fff">B</span><span style="color:#fff">w</span><span style="color:#fff">c</span><span style="color:#fff">m</span> <span style="color:#fff">l</span><span style="color:#fff">u</span><span style="color:#fff">d</span><span style="color:#fff">C</span><span style="color:#fff">h</span><span style="color:#fff">w</span><span style="color:#fff">Y</span><span style="color:#fff">X</span></div>
<div class="a" style="left:1644.00px;top:1146.48px;width:515.28px;height:22.52px;background:#617785"></div>
<div class="a" style="left:2191.49px;top:1146.48px;width:182.49px;height:22.52px;background:#617785"></div>
<div class="hl m" style="left:1579.59px;top:1147.58px;color:#404040"><span class="z">0</span>15<span class="z">0</span></div>
<div class="hl m" style="left:1644.00px;top:1147.58px"><span style="color:#fff">4e</span> <span style="color:#fff">7a</span> <span style="color:#fff">64</span> <span style="color:#fff">47</span> <span style="color:#fff">68</span> <span style="color:#fff">79</span> <span style="color:#fff">64</span> <span style="color:#fff">53</span>  <span style="color:#fff">67</span> <span style="color:#fff">67</span> <span style="color:#fff">4a</span> <span style="color:#fff">46</span> <span style="color:#fff">39</span> <span style="color:#fff">48</span> <span style="color:#fff">52</span> <span style="color:#fff">56</span></div>
<div class="hl m" style="left:2191.49px;top:1147.58px"><span style="color:#fff">N</span><span style="color:#fff">z</span><span style="color:#fff">d</span><span style="color:#fff">G</span><span style="color:#fff">h</span><span style="color:#fff">y</span><span style="color:#fff">d</span><span style="color:#fff">S</span> <span style="color:#fff">g</span><span style="color:#fff">g</span><span style="color:#fff">J</span><span style="color:#fff">F</span><span style="color:#fff">9</span><span style="color:#fff">H</span><span style="color:#fff">R</span><span style="color:#fff">V</span></div>
<div class="a" style="left:1644.00px;top:1169.00px;width:515.28px;height:22.52px;background:#617785"></div>
<div class="a" style="left:2191.49px;top:1169.00px;width:182.49px;height:22.52px;background:#617785"></div>
<div class="hl m" style="left:1579.59px;top:1170.10px;color:#404040"><span class="z">0</span>16<span class="z">0</span></div>
<div class="hl m" style="left:1644.00px;top:1170.10px"><span style="color:#fff">52</span> <span style="color:#fff">62</span> <span style="color:#fff">49</span> <span style="color:#fff">6d</span> <span style="color:#fff">4d</span> <span style="color:#fff">69</span> <span style="color:#fff">58</span> <span style="color:#fff">53</span>  <span style="color:#fff">6b</span> <span style="color:#fff">7<span class="z">0</span></span> <span style="color:#fff">4f</span> <span style="color:#fff">7a</span> <span style="color:#fff">38</span> <span style="color:#fff">2b</span> <span style="color:#fff">4a</span> <span style="color:#fff">7a</span></div>
<div class="hl m" style="left:2191.49px;top:1170.10px"><span style="color:#fff">R</span><span style="color:#fff">b</span><span style="color:#fff">I</span><span style="color:#fff">m</span><span style="color:#fff">M</span><span style="color:#fff">i</span><span style="color:#fff">X</span><span style="color:#fff">S</span> <span style="color:#fff">k</span><span style="color:#fff">p</span><span style="color:#fff">O</span><span style="color:#fff">z</span><span style="color:#fff">8</span><span style="color:#fff">+</span><span style="color:#fff">J</span><span style="color:#fff">z</span></div>
<div class="a" style="left:1644.00px;top:1191.52px;width:515.28px;height:22.52px;background:#617785"></div>
<div class="a" style="left:2191.49px;top:1191.52px;width:182.49px;height:22.52px;background:#617785"></div>
<div class="hl m" style="left:1579.59px;top:1192.62px;color:#404040"><span class="z">0</span>17<span class="z">0</span></div>
<div class="hl m" style="left:1644.00px;top:1192.62px"><span style="color:#fff">74</span> <span style="color:#fff">6d</span> <span style="color:#fff">64</span> <span style="color:#fff">33</span> <span style="color:#fff">4a</span> <span style="color:#fff">7<span class="z">0</span></span> <span style="color:#fff">64</span> <span style="color:#fff">47</span>  <span style="color:#fff">55</span> <span style="color:#fff">6f</span> <span style="color:#fff">4a</span> <span style="color:#fff">47</span> <span style="color:#fff">45</span> <span style="color:#fff">73</span> <span style="color:#fff">4a</span> <span style="color:#fff">48</span></div>
<div class="hl m" style="left:2191.49px;top:1192.62px"><span style="color:#fff">t</span><span style="color:#fff">m</span><span style="color:#fff">d</span><span style="color:#fff">3</span><span style="color:#fff">J</span><span style="color:#fff">p</span><span style="color:#fff">d</span><span style="color:#fff">G</span> <span style="color:#fff">U</span><span style="color:#fff">o</span><span style="color:#fff">J</span><span style="color:#fff">G</span><span style="color:#fff">E</span><span style="color:#fff">s</span><span style="color:#fff">J</span><span style="color:#fff">H</span></div>
<div class="a" style="left:1644.00px;top:1214.04px;width:515.28px;height:22.52px;background:#617785"></div>
<div class="a" style="left:2191.49px;top:1214.04px;width:182.49px;height:22.52px;background:#617785"></div>
<div class="hl m" style="left:1579.59px;top:1215.14px;color:#404040"><span class="z">0</span>18<span class="z">0</span></div>
<div class="hl m" style="left:1644.00px;top:1215.14px"><span style="color:#fff">51</span> <span style="color:#fff">7<span class="z">0</span></span> <span style="color:#fff">4f</span> <span style="color:#fff">32</span> <span style="color:#fff">5a</span> <span style="color:#fff">6a</span> <span style="color:#fff">62</span> <span style="color:#fff">47</span>  <span style="color:#fff">39</span> <span style="color:#fff">7a</span> <span style="color:#fff">5a</span> <span style="color:#fff">53</span> <span style="color:#fff">67</span> <span style="color:#fff">67</span> <span style="color:#fff">4a</span> <span style="color:#fff">47</span></div>
<div class="hl m" style="left:2191.49px;top:1215.14px"><span style="color:#fff">Q</span><span style="color:#fff">p</span><span style="color:#fff">O</span><span style="color:#fff">2</span><span style="color:#fff">Z</span><span style="color:#fff">j</span><span style="color:#fff">b</span><span style="color:#fff">G</span> <span style="color:#fff">9</span><span style="color:#fff">z</span><span style="color:#fff">Z</span><span style="color:#fff">S</span><span style="color:#fff">g</span><span style="color:#fff">g</span><span style="color:#fff">J</span><span style="color:#fff">G</span></div>
<div class="a" style="left:1644.00px;top:1236.56px;width:515.28px;height:22.52px;background:#617785"></div>
<div class="a" style="left:2191.49px;top:1236.56px;width:182.49px;height:22.52px;background:#617785"></div>
<div class="hl m" style="left:1579.59px;top:1237.66px;color:#404040"><span class="z">0</span>19<span class="z">0</span></div>
<div class="hl m" style="left:1644.00px;top:1237.66px"><span style="color:#fff">45</span> <span style="color:#fff">7<span class="z">0</span></span> <span style="color:#fff">4f</span> <span style="color:#fff">7a</span> <span style="color:#fff">38</span> <span style="color:#fff">2b</span> <span style="color:#fff">5a</span> <span style="color:#fff">6d</span>  <span style="color:#fff">78</span> <span style="color:#fff">68</span> <span style="color:#fff">5a</span> <span style="color:#fff">33</span> <span style="color:#fff">74</span> <span style="color:#fff">6a</span> <span style="color:#fff">4f</span> <span style="color:#fff">54</span></div>
<div class="hl m" style="left:2191.49px;top:1237.66px"><span style="color:#fff">E</span><span style="color:#fff">p</span><span style="color:#fff">O</span><span style="color:#fff">z</span><span style="color:#fff">8</span><span style="color:#fff">+</span><span style="color:#fff">Z</span><span style="color:#fff">m</span> <span style="color:#fff">x</span><span style="color:#fff">h</span><span style="color:#fff">Z</span><span style="color:#fff">3</span><span style="color:#fff">t</span><span style="color:#fff">j</span><span style="color:#fff">O</span><span style="color:#fff">T</span></div>
<div class="a" style="left:1644.00px;top:1259.08px;width:515.28px;height:22.52px;background:#617785"></div>
<div class="a" style="left:2191.49px;top:1259.08px;width:182.49px;height:22.52px;background:#617785"></div>
<div class="hl m" style="left:1579.59px;top:1260.18px;color:#404040"><span class="z">0</span>1a<span class="z">0</span></div>
<div class="hl m" style="left:1644.00px;top:1260.18px"><span style="color:#fff">4d</span> <span style="color:#fff">77</span> <span style="color:#fff">59</span> <span style="color:#fff">54</span> <span style="color:#fff">49</span> <span style="color:#fff">77</span> <span style="color:#fff">4e</span> <span style="color:#fff">7a</span>  <span style="color:#fff">49</span> <span style="color:#fff">35</span> <span style="color:#fff">59</span> <span style="color:#fff">32</span> <span style="color:#fff">51</span> <span style="color:#fff">33</span> <span style="color:#fff">4d</span> <span style="color:#fff">54</span></div>
<div class="hl m" style="left:2191.49px;top:1260.18px"><span style="color:#fff">M</span><span style="color:#fff">w</span><span style="color:#fff">Y</span><span style="color:#fff">T</span><span style="color:#fff">I</span><span style="color:#fff">w</span><span style="color:#fff">N</span><span style="color:#fff">z</span> <span style="color:#fff">I</span><span style="color:#fff">5</span><span style="color:#fff">Y</span><span style="color:#fff">2</span><span style="color:#fff">Q</span><span style="color:#fff">3</span><span style="color:#fff">M</span><span style="color:#fff">T</span></div>
<div class="a" style="left:1644.00px;top:1281.60px;width:515.28px;height:22.52px;background:#617785"></div>
<div class="a" style="left:2191.49px;top:1281.60px;width:182.49px;height:22.52px;background:#617785"></div>
<div class="hl m" style="left:1579.59px;top:1282.70px;color:#404040"><span class="z">0</span>1b<span class="z">0</span></div>
<div class="hl m" style="left:1644.00px;top:1282.70px"><span style="color:#fff">42</span> <span style="color:#fff">6a</span> <span style="color:#fff">4f</span> <span style="color:#fff">57</span> <span style="color:#fff">46</span> <span style="color:#fff">6a</span> <span style="color:#fff">4d</span> <span style="color:#fff">6d</span>  <span style="color:#fff">55</span> <span style="color:#fff">78</span> <span style="color:#fff">59</span> <span style="color:#fff">6d</span> <span style="color:#fff">4e</span> <span style="color:#fff">6b</span> <span style="color:#fff">4d</span> <span style="color:#fff">7a</span></div>
<div class="hl m" style="left:2191.49px;top:1282.70px"><span style="color:#fff">B</span><span style="color:#fff">j</span><span style="color:#fff">O</span><span style="color:#fff">W</span><span style="color:#fff">F</span><span style="color:#fff">j</span><span style="color:#fff">M</span><span style="color:#fff">m</span> <span style="color:#fff">U</span><span style="color:#fff">x</span><span style="color:#fff">Y</span><span style="color:#fff">m</span><span style="color:#fff">N</span><span style="color:#fff">k</span><span style="color:#fff">M</span><span style="color:#fff">z</span></div>
<div class="a" style="left:1644.00px;top:1304.12px;width:515.28px;height:22.52px;background:#617785"></div>
<div class="a" style="left:2191.49px;top:1304.12px;width:182.49px;height:22.52px;background:#617785"></div>
<div class="hl m" style="left:1579.59px;top:1305.22px;color:#404040"><span class="z">0</span>1c<span class="z">0</span></div>
<div class="hl m" style="left:1644.00px;top:1305.22px"><span style="color:#fff">59</span> <span style="color:#fff">34</span> <span style="color:#fff">4e</span> <span style="color:#fff">54</span> <span style="color:#fff">5a</span> <span style="color:#fff">6c</span> <span style="color:#fff">4e</span> <span style="color:#fff">58</span>  <span style="color:#fff">3<span class="z">0</span></span> <span style="color:#fff">3d</span> <span style="color:#fff">27</span> <span style="color:#fff">7c</span> <span style="color:#fff">7<span class="z">0</span></span> <span style="color:#fff">79</span> <span style="color:#fff">74</span> <span style="color:#fff">68</span></div>
<div class="hl m" style="left:2191.49px;top:1305.22px"><span style="color:#fff">Y</span><span style="color:#fff">4</span><span style="color:#fff">N</span><span style="color:#fff">T</span><span style="color:#fff">Z</span><span style="color:#fff">l</span><span style="color:#fff">N</span><span style="color:#fff">X</span> <span style="color:#fff"><span class="z">0</span></span><span style="color:#fff">=</span><span style="color:#fff">&#x27;</span><span style="color:#fff">|</span><span style="color:#fff">p</span><span style="color:#fff">y</span><span style="color:#fff">t</span><span style="color:#fff">h</span></div>
<div class="a" style="left:1644.00px;top:1326.64px;width:515.28px;height:22.52px;background:#617785"></div>
<div class="a" style="left:2191.49px;top:1326.64px;width:182.49px;height:22.52px;background:#617785"></div>
<div class="hl m" style="left:1579.59px;top:1327.74px;color:#404040"><span class="z">0</span>1d<span class="z">0</span></div>
<div class="hl m" style="left:1644.00px;top:1327.74px"><span style="color:#fff">6f</span> <span style="color:#fff">6e</span> <span style="color:#fff">33</span> <span style="color:#fff">2e</span> <span style="color:#fff">38</span> <span style="color:#fff">2<span class="z">0</span></span> <span style="color:#fff">2d</span> <span style="color:#fff">6d</span>  <span style="color:#fff">2<span class="z">0</span></span> <span style="color:#fff">62</span> <span style="color:#fff">61</span> <span style="color:#fff">73</span> <span style="color:#fff">65</span> <span style="color:#fff">36</span> <span style="color:#fff">34</span> <span style="color:#fff">2<span class="z">0</span></span></div>
<div class="hl m" style="left:2191.49px;top:1327.74px"><span style="color:#fff">o</span><span style="color:#fff">n</span><span style="color:#fff">3</span><span style="color:#fff">.</span><span style="color:#fff">8</span><span style="color:#fff"> </span><span style="color:#fff">-</span><span style="color:#fff">m</span> <span style="color:#fff"> </span><span style="color:#fff">b</span><span style="color:#fff">a</span><span style="color:#fff">s</span><span style="color:#fff">e</span><span style="color:#fff">6</span><span style="color:#fff">4</span><span style="color:#fff"> </span></div>
<div class="a" style="left:1644.00px;top:1349.16px;width:418.66px;height:22.52px;background:#617785"></div>
<div class="a" style="left:2191.49px;top:1349.16px;width:150.29px;height:22.52px;background:#617785"></div>
<div class="hl m" style="left:1579.59px;top:1350.26px;color:#404040"><span class="z">0</span>1e<span class="z">0</span></div>
<div class="hl m" style="left:1644.00px;top:1350.26px"><span style="color:#fff">2d</span> <span style="color:#fff">64</span> <span style="color:#fff">2<span class="z">0</span></span> <span style="color:#fff">7c</span> <span style="color:#fff">2<span class="z">0</span></span> <span style="color:#fff">7<span class="z">0</span></span> <span style="color:#fff">68</span> <span style="color:#fff">7<span class="z">0</span></span>  <span style="color:#fff">3b</span> <span style="color:#fff">2<span class="z">0</span></span> <span style="color:#fff">27</span> <span style="color:#fff"><span class="z">0</span>d</span> <span style="color:#fff"><span class="z">0</span>a</span> <span class="z">0</span>d <span class="z">0</span>a</div>
<div class="hl m" style="left:2191.49px;top:1350.26px"><span style="color:#fff">-</span><span style="color:#fff">d</span><span style="color:#fff"> </span><span style="color:#fff">|</span><span style="color:#fff"> </span><span style="color:#fff">p</span><span style="color:#fff">h</span><span style="color:#fff">p</span> <span style="color:#fff">;</span><span style="color:#fff"> </span><span style="color:#fff">&#x27;</span><span class="ds">·</span><span class="ds">·</span><span class="d">·</span><span class="d">·</span></div>
<div class="a" style="left:1910.38px;top:1055.40px;width:24.47px;height:23.52px;border:1px solid #44555f"></div>
<div class="a" style="left:2287.10px;top:1055.40px;width:12.73px;height:23.52px;border:1px solid #44555f"></div>
</body></html>
